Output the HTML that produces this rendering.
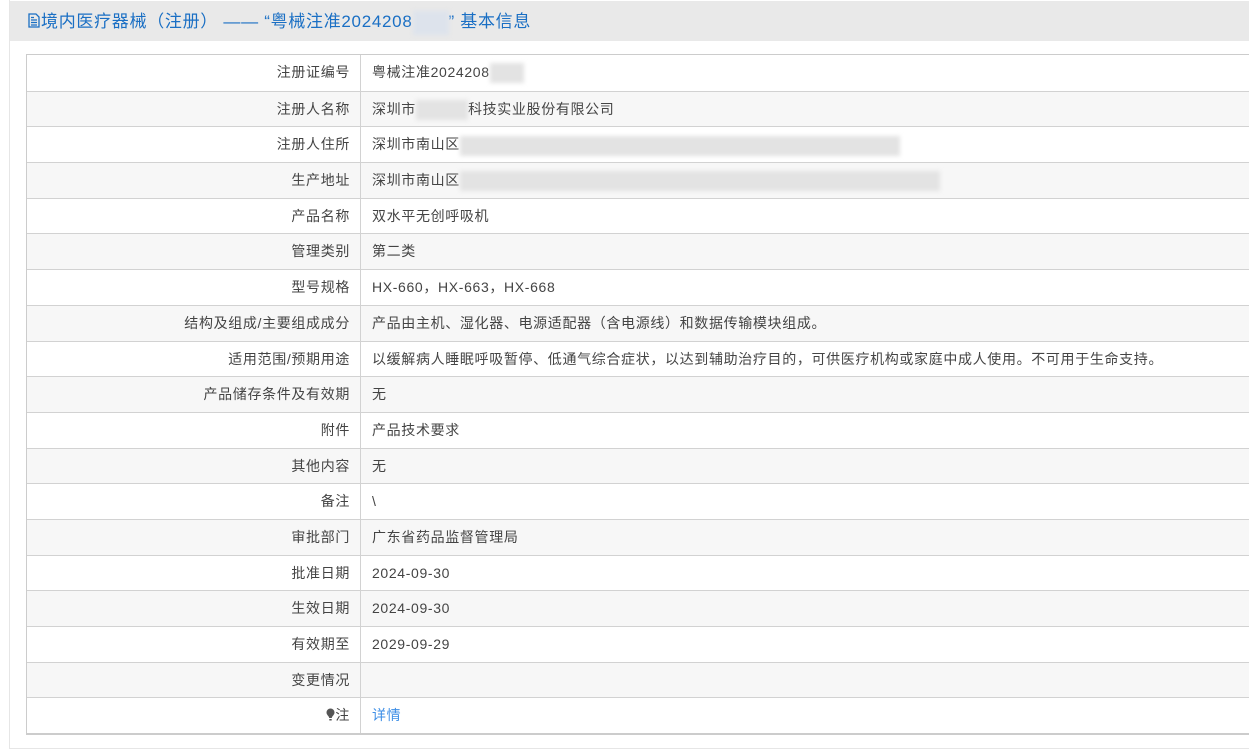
<!DOCTYPE html>
<html><head><meta charset="utf-8"><style>
*{margin:0;padding:0;box-sizing:border-box}
body{width:1249px;height:754px;background:#fff;overflow:hidden;font-family:"Liberation Sans","Noto Sans CJK SC",sans-serif;font-size:14px;color:#444;letter-spacing:0.65px}
.panel{position:absolute;left:9px;top:0;width:1260px;height:749px;border:1px solid #e6e6e6;border-top:none}
.hd{position:absolute;left:0;top:1px;right:0;height:40px;background:#e9e9e9;color:#1a6fc4;font-size:17px;line-height:42px;padding-left:17px;letter-spacing:0.7px;white-space:nowrap}
.blur{display:inline-block;background:#dde3ec;filter:blur(2px);vertical-align:middle}
.tbl{position:absolute;left:16px;top:54px;width:1240px;border:1px solid #ccc;border-right:none;border-bottom:2px solid #ccc}
.r{height:35.7px;border-top:1px solid #d2d2d2;display:flex;line-height:34px}
.r:first-child{border-top:none}
.r:nth-child(even){background:#f7f7f7}
.l{width:334px;border-right:1px solid #d2d2d2;text-align:right;padding-right:10px;flex:none}
.v{padding-left:11px;white-space:nowrap}
.g{display:inline-block;background:#e3e3e3;filter:blur(2px);height:20px;vertical-align:middle}
a{color:#3d8ee6;text-decoration:none}
</style></head><body>
<div class="panel">
<div class="hd"><svg width="14" height="15" viewBox="0 0 14 15" style="vertical-align:-1px"><path d="M2 1h7l3 3v10H2z" fill="none" stroke="#1a6fc4" stroke-width="1.3"/><path d="M4 7h6M4 9.5h6M4 12h6M4 4.5h3" stroke="#1a6fc4" stroke-width="1.2"/></svg>境内医疗器械（注册） —— “粤械注准2024208<span class="blur" style="width:36px;height:24px"></span>” 基本信息</div>
<div class="tbl">
<div class="r"><div class="l">注册证编号</div><div class="v">粤械注准2024208<span class="g" style="width:34px"></span></div></div>
<div class="r"><div class="l">注册人名称</div><div class="v">深圳市<span class="g" style="width:52px"></span>科技实业股份有限公司</div></div>
<div class="r"><div class="l">注册人住所</div><div class="v">深圳市南山区<span class="g" style="width:440px"></span></div></div>
<div class="r"><div class="l">生产地址</div><div class="v">深圳市南山区<span class="g" style="width:480px"></span></div></div>
<div class="r"><div class="l">产品名称</div><div class="v">双水平无创呼吸机</div></div>
<div class="r"><div class="l">管理类别</div><div class="v">第二类</div></div>
<div class="r"><div class="l">型号规格</div><div class="v">HX-660，HX-663，HX-668</div></div>
<div class="r"><div class="l">结构及组成/主要组成成分</div><div class="v">产品由主机、湿化器、电源适配器（含电源线）和数据传输模块组成。</div></div>
<div class="r"><div class="l">适用范围/预期用途</div><div class="v">以缓解病人睡眠呼吸暂停、低通气综合症状，以达到辅助治疗目的，可供医疗机构或家庭中成人使用。不可用于生命支持。</div></div>
<div class="r"><div class="l">产品储存条件及有效期</div><div class="v">无</div></div>
<div class="r"><div class="l">附件</div><div class="v">产品技术要求</div></div>
<div class="r"><div class="l">其他内容</div><div class="v">无</div></div>
<div class="r"><div class="l">备注</div><div class="v">\</div></div>
<div class="r"><div class="l">审批部门</div><div class="v">广东省药品监督管理局</div></div>
<div class="r"><div class="l">批准日期</div><div class="v">2024-09-30</div></div>
<div class="r"><div class="l">生效日期</div><div class="v">2024-09-30</div></div>
<div class="r"><div class="l">有效期至</div><div class="v">2029-09-29</div></div>
<div class="r"><div class="l">变更情况</div><div class="v"></div></div>
<div class="r"><div class="l"><svg width="9" height="13" viewBox="0 0 9 13" style="vertical-align:-1px"><path d="M4.5 0.5A4 4 0 0 1 8.5 4.5C8.5 7 6 8 5.8 10H3.2C3 8 0.5 7 0.5 4.5A4 4 0 0 1 4.5 0.5z" fill="#555"/><rect x="3.3" y="11" width="2.4" height="1.5" fill="#555"/></svg>注</div><div class="v"><a>详情</a></div></div>
</div>
</div>
</body></html>
